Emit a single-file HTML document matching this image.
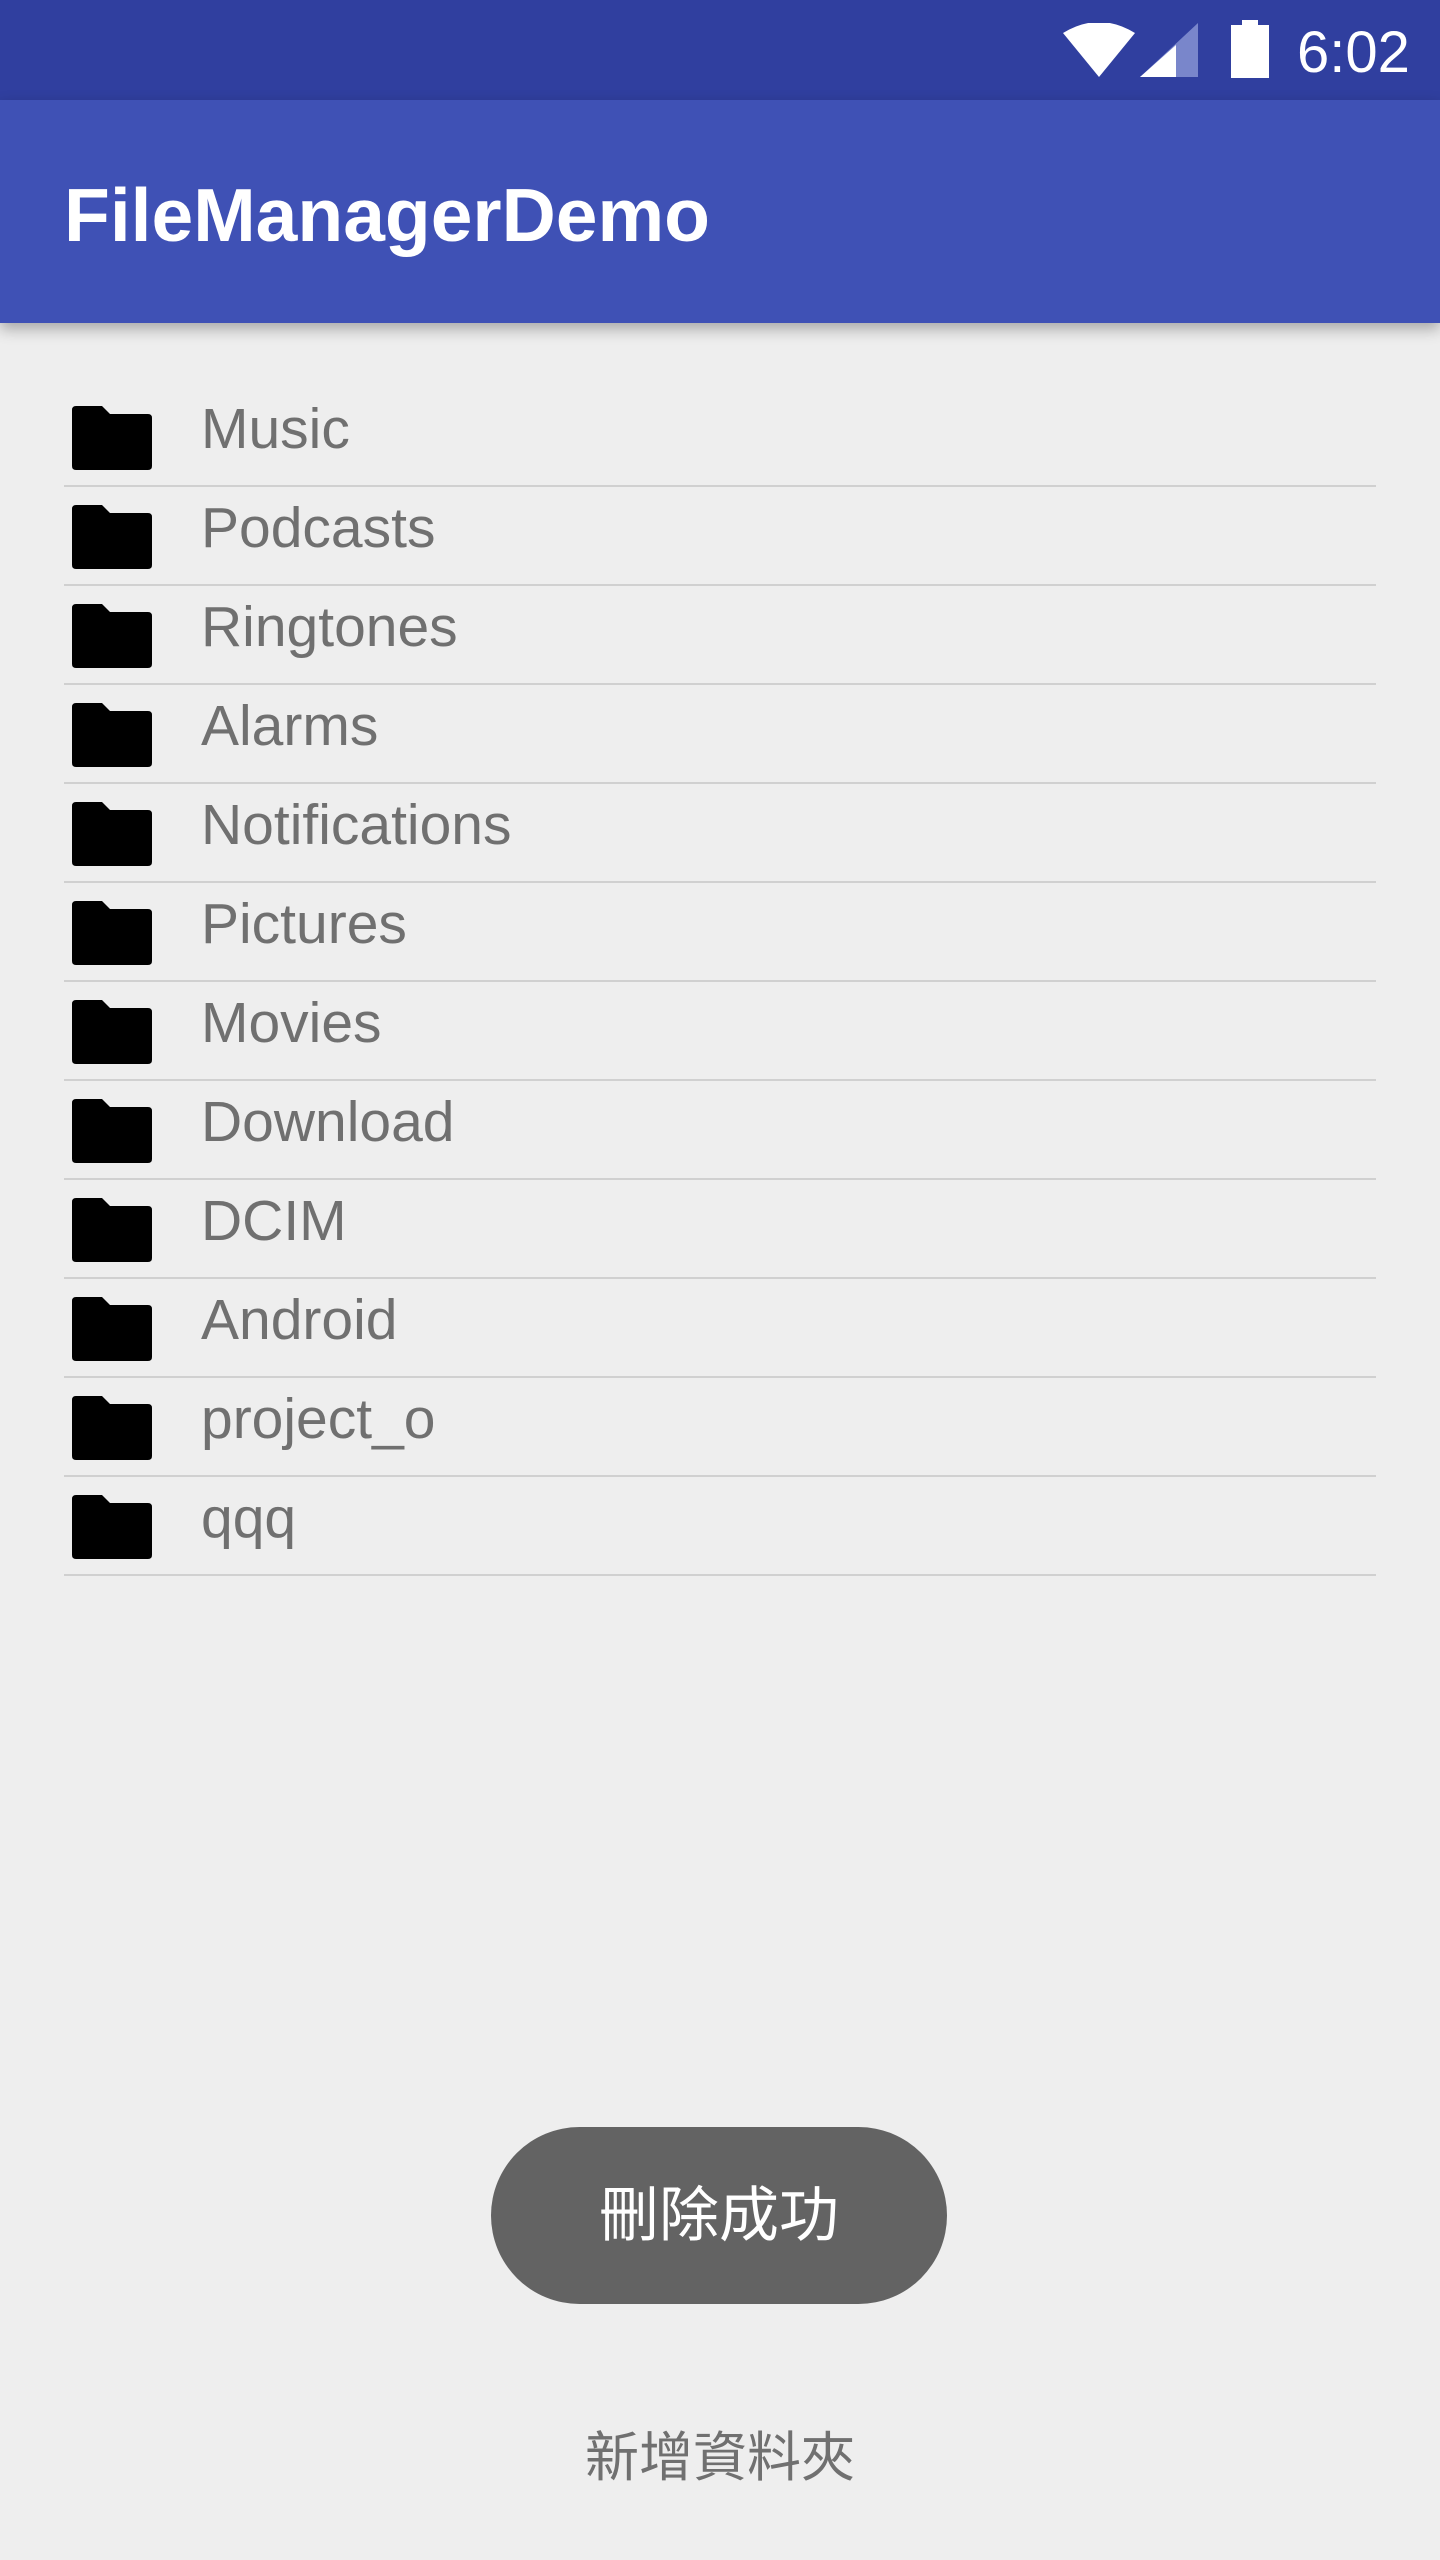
<!DOCTYPE html>
<html><head><meta charset="utf-8"><style>
body{margin:0;width:1440px;height:2560px;background:#eeeeee;font-family:"Liberation Sans","Noto Sans CJK TC",sans-serif;position:relative;overflow:hidden}
.sb{position:absolute;left:0;top:0;width:1440px;height:100px;background:#303f9f}
.ab{position:absolute;left:0;top:100px;width:1440px;height:223px;background:#3f51b5;box-shadow:0 6px 14px rgba(0,0,0,.3)}
.title{position:absolute;left:64px;top:75px;color:#fff;font-size:75px;font-weight:bold;line-height:80px}
.time{position:absolute;left:1297px;top:21px;color:#fff;font-size:58px;line-height:64px}
.row{position:absolute;left:64px;width:1312px;height:99px;border-bottom:2px solid #d0d0d0}
.row svg{position:absolute;left:8px;top:20px}
.row span{position:absolute;left:137px;top:-5px;line-height:96px;font-size:57px;color:#707070}
.toast{position:absolute;left:491px;top:2127px;width:456px;height:177px;border-radius:89px;background:#636363;color:#fff;font-size:60px;text-align:center;line-height:177px}
.btn{position:absolute;left:0;width:1440px;top:2420px;text-align:center;font-size:54px;color:#707070;line-height:76px}
</style></head><body>
<div class="sb">
<svg style="position:absolute;left:1063px;top:23px" width="72" height="54" viewBox="0 0 72 54"><path d="M0 10 Q36 -12 72 10 L36 54 Z" fill="#fff"/></svg>
<svg style="position:absolute;left:1140px;top:23px" width="58" height="54" viewBox="0 0 58 54"><path d="M58 0 V54 H0 Z" fill="#7986cb"/><path d="M36 22 V54 H0 Z" fill="#fff"/></svg>
<svg style="position:absolute;left:1231px;top:20px" width="38" height="58" viewBox="0 0 38 58"><rect x="11" y="0" width="16" height="6" fill="#fff"/><rect x="0" y="5" width="38" height="53" fill="#fff"/></svg>
<div class="time">6:02</div>
</div>
<div class="ab"><div class="title">FileManagerDemo</div></div>
<div class="row" style="top:386px"><svg width="80" height="64" viewBox="0 0 80 64"><path d="M0 4 Q0 0 4 0 H30 L38 8 H76 Q80 8 80 12 V60 Q80 64 76 64 H4 Q0 64 0 60 Z" fill="#000"/></svg><span>Music</span></div>
<div class="row" style="top:485px"><svg width="80" height="64" viewBox="0 0 80 64"><path d="M0 4 Q0 0 4 0 H30 L38 8 H76 Q80 8 80 12 V60 Q80 64 76 64 H4 Q0 64 0 60 Z" fill="#000"/></svg><span>Podcasts</span></div>
<div class="row" style="top:584px"><svg width="80" height="64" viewBox="0 0 80 64"><path d="M0 4 Q0 0 4 0 H30 L38 8 H76 Q80 8 80 12 V60 Q80 64 76 64 H4 Q0 64 0 60 Z" fill="#000"/></svg><span>Ringtones</span></div>
<div class="row" style="top:683px"><svg width="80" height="64" viewBox="0 0 80 64"><path d="M0 4 Q0 0 4 0 H30 L38 8 H76 Q80 8 80 12 V60 Q80 64 76 64 H4 Q0 64 0 60 Z" fill="#000"/></svg><span>Alarms</span></div>
<div class="row" style="top:782px"><svg width="80" height="64" viewBox="0 0 80 64"><path d="M0 4 Q0 0 4 0 H30 L38 8 H76 Q80 8 80 12 V60 Q80 64 76 64 H4 Q0 64 0 60 Z" fill="#000"/></svg><span>Notifications</span></div>
<div class="row" style="top:881px"><svg width="80" height="64" viewBox="0 0 80 64"><path d="M0 4 Q0 0 4 0 H30 L38 8 H76 Q80 8 80 12 V60 Q80 64 76 64 H4 Q0 64 0 60 Z" fill="#000"/></svg><span>Pictures</span></div>
<div class="row" style="top:980px"><svg width="80" height="64" viewBox="0 0 80 64"><path d="M0 4 Q0 0 4 0 H30 L38 8 H76 Q80 8 80 12 V60 Q80 64 76 64 H4 Q0 64 0 60 Z" fill="#000"/></svg><span>Movies</span></div>
<div class="row" style="top:1079px"><svg width="80" height="64" viewBox="0 0 80 64"><path d="M0 4 Q0 0 4 0 H30 L38 8 H76 Q80 8 80 12 V60 Q80 64 76 64 H4 Q0 64 0 60 Z" fill="#000"/></svg><span>Download</span></div>
<div class="row" style="top:1178px"><svg width="80" height="64" viewBox="0 0 80 64"><path d="M0 4 Q0 0 4 0 H30 L38 8 H76 Q80 8 80 12 V60 Q80 64 76 64 H4 Q0 64 0 60 Z" fill="#000"/></svg><span>DCIM</span></div>
<div class="row" style="top:1277px"><svg width="80" height="64" viewBox="0 0 80 64"><path d="M0 4 Q0 0 4 0 H30 L38 8 H76 Q80 8 80 12 V60 Q80 64 76 64 H4 Q0 64 0 60 Z" fill="#000"/></svg><span>Android</span></div>
<div class="row" style="top:1376px"><svg width="80" height="64" viewBox="0 0 80 64"><path d="M0 4 Q0 0 4 0 H30 L38 8 H76 Q80 8 80 12 V60 Q80 64 76 64 H4 Q0 64 0 60 Z" fill="#000"/></svg><span>project_o</span></div>
<div class="row" style="top:1475px"><svg width="80" height="64" viewBox="0 0 80 64"><path d="M0 4 Q0 0 4 0 H30 L38 8 H76 Q80 8 80 12 V60 Q80 64 76 64 H4 Q0 64 0 60 Z" fill="#000"/></svg><span>qqq</span></div>
<div class="toast">刪除成功</div>
<div class="btn">新增資料夾</div>
</body></html>
